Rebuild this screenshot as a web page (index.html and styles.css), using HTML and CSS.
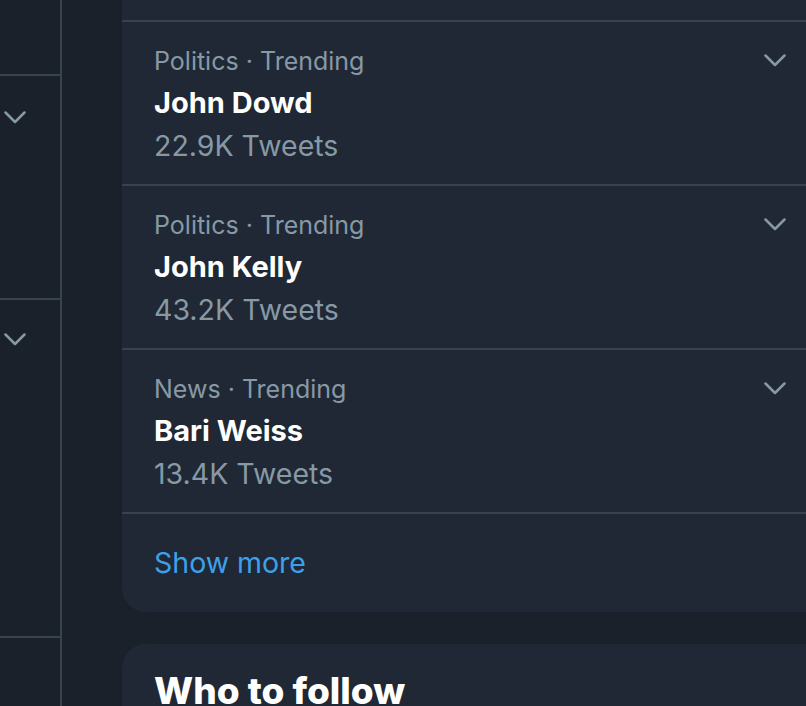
FILE: index.html
```html
<!DOCTYPE html>
<html lang="en">
<head>
<meta charset="utf-8">
<title>Trends</title>
<link rel="stylesheet" href="styles.css">
</head>
<body>
<div class="page">
  <aside class="timeline">
    <div class="tweet tweet-top"></div>
    <div class="tweet tweet-mid">
      <svg class="caret" viewBox="0 0 22 13" width="22" height="13"><polyline points="1.5,1.5 11,11 20.5,1.5"/></svg>
    </div>
    <div class="tweet tweet-long">
      <svg class="caret" viewBox="0 0 22 13" width="22" height="13"><polyline points="1.5,1.5 11,11 20.5,1.5"/></svg>
    </div>
    <div class="tweet tweet-end"></div>
  </aside>
  <main class="sidebar">
    <section class="card trends">
      <div class="trend-cut"></div>
      <div class="trend">
        <div class="trend-text">
          <div class="meta">Politics · Trending</div>
          <div class="name">John Dowd</div>
          <div class="count">22.9K Tweets</div>
        </div>
        <svg class="caret" viewBox="0 0 22 13" width="22" height="13"><polyline points="1.5,1.5 11,11 20.5,1.5"/></svg>
      </div>
      <div class="trend">
        <div class="trend-text">
          <div class="meta">Politics · Trending</div>
          <div class="name">John Kelly</div>
          <div class="count">43.2K Tweets</div>
        </div>
        <svg class="caret" viewBox="0 0 22 13" width="22" height="13"><polyline points="1.5,1.5 11,11 20.5,1.5"/></svg>
      </div>
      <div class="trend">
        <div class="trend-text">
          <div class="meta">News · Trending</div>
          <div class="name">Bari Weiss</div>
          <div class="count">13.4K Tweets</div>
        </div>
        <svg class="caret" viewBox="0 0 22 13" width="22" height="13"><polyline points="1.5,1.5 11,11 20.5,1.5"/></svg>
      </div>
      <a class="show-more" href="#">Show more</a>
    </section>
    <section class="card follow">
      <h2 class="follow-title">Who to follow</h2>
    </section>
  </main>
</div>
</body>
</html>
```

FILE: styles.css
```css
html, body {
  margin: 0;
  padding: 0;
  height: 100%;
  overflow: hidden;
}

body {
  background: #1a212b;
  font-family: Inter, "Liberation Sans", sans-serif;
  color: #ffffff;
}

.page {
  display: flex;
  align-items: flex-start;
}

.timeline {
  width: 62px;
  flex: none;
  box-sizing: border-box;
  border-right: 2px solid #38444d;
  min-height: 706px;
}

.tweet {
  box-sizing: border-box;
  border-bottom: 2px solid #38444d;
  padding-left: 4px;
}

.tweet-top { height: 76px; }
.tweet-mid { height: 224px; padding-top: 35px; }
.tweet-long { height: 338px; padding-top: 33px; }
.tweet-end { height: 100px; border-bottom: none; }

.tweet .caret {
  display: block;
}

.caret {
  flex: none;
  fill: none;
  stroke: #8899a6;
  stroke-width: 2.5;
  stroke-linecap: round;
  stroke-linejoin: round;
}

.sidebar {
  margin-left: 60px;
  width: 714px;
  flex: none;
  display: flex;
  flex-direction: column;
  gap: 32px;
}

.card {
  background: #1f2834;
  border-radius: 24px;
}

.trends {
  border-top-left-radius: 0;
  border-top-right-radius: 0;
}

.trend-cut {
  height: 20px;
}

.trend {
  display: flex;
  align-items: flex-start;
  border-top: 2px solid #38444d;
  padding: 19px 50px 15px 32px;
}

.trend-text {
  flex: 1;
}

.trend .caret {
  margin-top: 13px;
}

.meta {
  font-size: 25px;
  line-height: 41px;
  color: #8899a6;
}

.name {
  font-size: 29px;
  line-height: 41px;
  font-weight: 700;
  color: #ffffff;
}

.count {
  font-size: 28.5px;
  line-height: 46px;
  color: #8899a6;
}

.show-more {
  display: block;
  border-top: 2px solid #38444d;
  padding: 27px 32px 28px;
  font-size: 28.5px;
  line-height: 43px;
  color: #3ea0ea;
  text-decoration: none;
}

.follow {
  padding: 27px 32px 20px;
  border-bottom-left-radius: 0;
  border-bottom-right-radius: 0;
}

.follow-title {
  margin: 0;
  font-size: 37px;
  line-height: 40px;
  font-weight: 800;
  color: #ffffff;
}
```
